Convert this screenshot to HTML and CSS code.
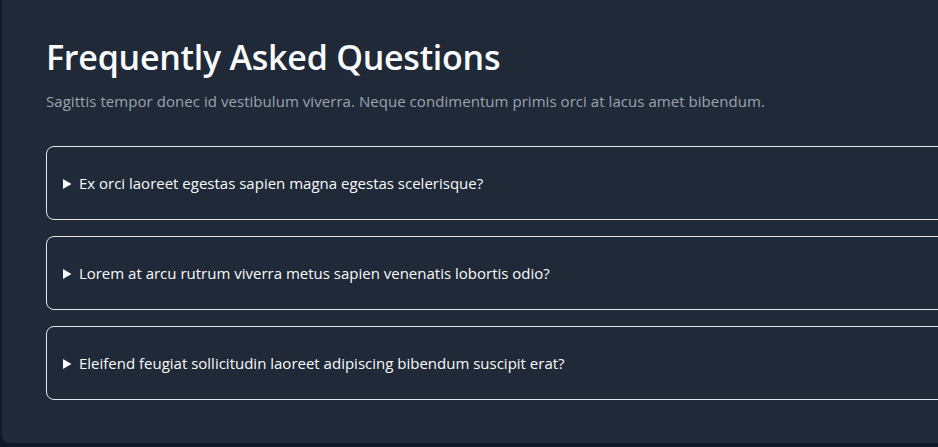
FILE: index.html
```html
<!DOCTYPE html>
<html lang="en">
<head>
<meta charset="utf-8">
<title>FAQ</title>
<link rel="stylesheet" href="styles.css">
</head>
<body>
<section class="panel">
  <h1 class="title">Frequently Asked Questions</h1>
  <p class="lead">Sagittis tempor donec id vestibulum viverra. Neque condimentum primis orci at lacus amet bibendum.</p>
  <div class="faq-list">
    <details class="faq">
      <summary class="faq-q">Ex orci laoreet egestas sapien magna egestas scelerisque?</summary>
    </details>
    <details class="faq">
      <summary class="faq-q">Lorem at arcu rutrum viverra metus sapien venenatis lobortis odio?</summary>
    </details>
    <details class="faq">
      <summary class="faq-q">Eleifend feugiat sollicitudin laoreet adipiscing bibendum suscipit erat?</summary>
    </details>
  </div>
</section>
</body>
</html>
```
FILE: styles.css
```css
html, body {
  margin: 0;
  padding: 0;
}
body {
  background: #111827;
  overflow: hidden;
  height: 447px;
  font-family: "Open Sans", "Noto Sans", sans-serif;
}
.panel {
  box-sizing: border-box;
  margin: -8px 0 0 2px;
  width: 1000px;
  height: 451px;
  background: #1f2937;
  border-radius: 8px;
  padding: 43px 0 0 44px;
}
.title {
  margin: 0;
  font-size: 34px;
  line-height: 44px;
  font-weight: 600;
  letter-spacing: -0.25px;
  color: #f9fafb;
}
.lead {
  margin: 11px 0 0;
  font-size: 15px;
  line-height: 22px;
  letter-spacing: 0.05px;
  color: #9ca3af;
}
.faq-list {
  margin-top: 34px;
  display: flex;
  flex-direction: column;
  gap: 16px;
}
.faq {
  border: 1px solid #e5e7eb;
  border-radius: 8px;
  padding: 24px 16px;
}
.faq-q {
  font-size: 15px;
  line-height: 24px;
  color: #f9fafb;
  cursor: pointer;
}
```
